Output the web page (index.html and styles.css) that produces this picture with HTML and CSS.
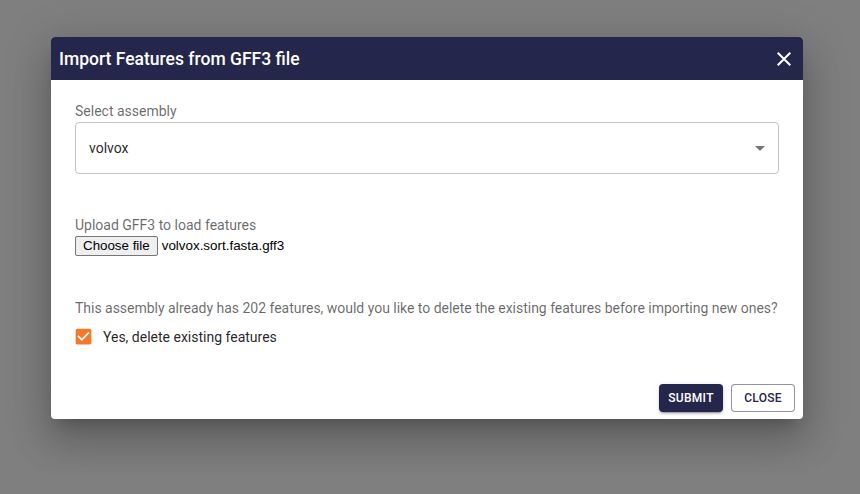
FILE: index.html
```html
<!DOCTYPE html>
<html lang="en">
<head>
<meta charset="utf-8">
<title>Import Features from GFF3 file</title>
<link rel="stylesheet" href="styles.css">
</head>
<body>
<div class="backdrop">
  <div class="dialog" role="dialog">
    <div class="dialog-title">
      <h2 class="title-text">Import Features from GFF3 file</h2>
      <button class="icon-btn" aria-label="close">
        <svg viewBox="0 0 24 24" width="24" height="24"><path fill="#fff" d="M19 6.41 17.59 5 12 10.59 6.41 5 5 6.41 10.59 12 5 17.59 6.41 19 12 13.41 17.59 19 19 17.59 13.41 12z"/></svg>
      </button>
    </div>
    <div class="dialog-content">
      <div class="field-label">Select assembly</div>
      <div class="select-box">
        <span class="select-value">volvox</span>
        <svg class="select-arrow" viewBox="0 0 24 24" width="24" height="24"><path fill="rgba(0,0,0,0.54)" d="M7 10l5 5 5-5z"/></svg>
      </div>
      <div class="field-label upload-label">Upload GFF3 to load features</div>
      <div class="file-row">
        <button class="file-btn">Choose file</button>
        <span class="file-name">volvox.sort.fasta.gff3</span>
      </div>
      <p class="notice">This assembly already has 202 features, would you like to delete the existing features before importing new ones?</p>
      <label class="check-row">
        <svg class="checkbox" viewBox="0 0 24 24" width="21" height="21"><path fill="#f47a2a" d="M19 3H5c-1.11 0-2 .9-2 2v14c0 1.1.89 2 2 2h14c1.11 0 2-.9 2-2V5c0-1.1-.89-2-2-2zm-9 14l-5-5 1.41-1.41L10 14.17l7.59-7.59L19 8l-9 9z"/></svg>
        <span class="check-label">Yes, delete existing features</span>
      </label>
    </div>
    <div class="dialog-actions">
      <button class="btn btn-contained">Submit</button>
      <button class="btn btn-outlined">Close</button>
    </div>
  </div>
</div>
</body>
</html>
```

FILE: styles.css
```css
* { box-sizing: border-box; }
html, body { margin: 0; padding: 0; }
body {
  font-family: Roboto, "Liberation Sans", Arial, sans-serif;
  background: #fff;
}
.backdrop {
  width: 860px;
  height: 494px;
  background: rgba(0,0,0,0.5);
  padding: 37px 0 0 51px;
  display: flex;
  align-items: flex-start;
}
.dialog {
  width: 752px;
  background: #fff;
  border-radius: 4px;
  overflow: hidden;
  box-shadow: 0px 11px 15px -7px rgba(0,0,0,0.2), 0px 24px 38px 3px rgba(0,0,0,0.14), 0px 9px 46px 8px rgba(0,0,0,0.12);
  display: flex;
  flex-direction: column;
}
.dialog-title {
  height: 43px;
  background: #25264c;
  display: flex;
  align-items: center;
  justify-content: space-between;
  padding: 0 7px 0 8px;
}
.title-text {
  margin: 0;
  color: #fff;
  font-size: 17.5px;
  font-weight: 500;
  line-height: 24px;
}
.icon-btn {
  border: 0;
  background: transparent;
  padding: 0;
  width: 24px;
  height: 24px;
  display: flex;
  cursor: pointer;
}
.dialog-content {
  padding: 21px 24px 0;
  display: flex;
  flex-direction: column;
}
.field-label {
  font-size: 14px;
  line-height: 20px;
  color: rgba(0,0,0,0.6);
}
.select-box {
  margin-top: 1px;
  height: 52px;
  border: 1px solid rgba(0,0,0,0.23);
  border-radius: 4px;
  display: flex;
  align-items: center;
  justify-content: space-between;
  padding: 0 6px 0 13px;
}
.select-value {
  font-size: 14px;
  color: rgba(0,0,0,0.87);
}
.select-arrow { display: block; }
.upload-label { margin-top: 41px; }
.file-row {
  display: flex;
  align-items: center;
  margin-top: 0;
  height: 21px;
}
.file-btn {
  font-family: "Liberation Sans", Arial, sans-serif;
  font-size: 13.33px;
  color: #000;
  background: #efefef;
  border: 1px solid #767676;
  border-radius: 2px;
  height: 20px;
  padding: 0 7px;
  margin: 0 4px 0 0;
  line-height: 18px;
}
.file-name {
  font-family: "Liberation Sans", Arial, sans-serif;
  font-size: 13.4px;
  color: #000;
}
.notice {
  margin: 42px 0 0;
  font-size: 14px;
  line-height: 20px;
  color: rgba(0,0,0,0.6);
  white-space: nowrap;
  letter-spacing: -0.02px;
}
.check-row {
  display: flex;
  align-items: center;
  height: 21px;
  margin-top: 8px;
}
.checkbox {
  display: block;
  margin-left: -2px;
  flex: none;
}
.check-label {
  margin-left: 9px;
  font-size: 14px;
  color: rgba(0,0,0,0.87);
}
.dialog-actions {
  display: flex;
  justify-content: flex-end;
  gap: 8px;
  padding: 37px 8px 7px;
}
.btn {
  font-family: Roboto, "Liberation Sans", Arial, sans-serif;
  font-size: 12px;
  font-weight: 500;
  letter-spacing: 0.3px;
  text-transform: uppercase;
  height: 28px;
  width: 64px;
  border-radius: 4px;
  padding: 0;
  display: flex;
  align-items: center;
  justify-content: center;
  cursor: pointer;
}
.btn-contained {
  background: #25264c;
  color: #fff;
  border: 0;
  box-shadow: 0px 3px 1px -2px rgba(0,0,0,0.2), 0px 2px 2px 0px rgba(0,0,0,0.14), 0px 1px 5px 0px rgba(0,0,0,0.12);
}
.btn-outlined {
  background: #fff;
  color: #25264c;
  border: 1px solid rgba(37,38,76,0.5);
}
```
